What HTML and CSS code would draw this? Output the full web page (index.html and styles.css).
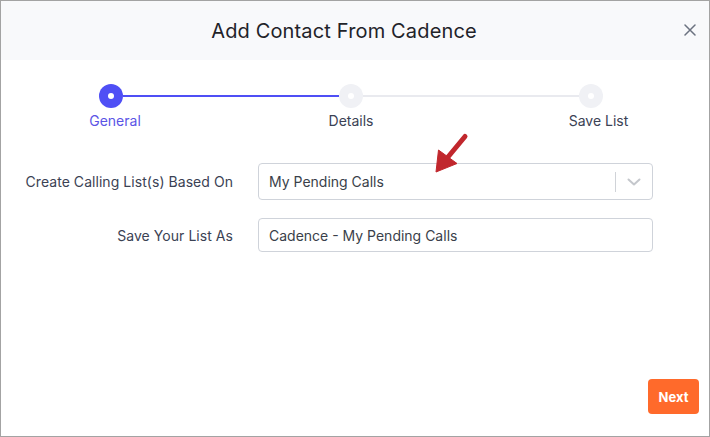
FILE: index.html
```html
<!DOCTYPE html>
<html>
<head>
<meta charset="utf-8">
<link rel="stylesheet" href="styles.css">
</head>
<body>
<div class="modal">
  <div class="header">
    <h1 class="title">Add Contact From Cadence</h1>
    <span class="close">
      <svg width="12" height="12" viewBox="0 0 12 12"><path d="M1 1L11 11M11 1L1 11" stroke="#6b7280" stroke-width="1.5" stroke-linecap="round"/></svg>
    </span>
  </div>
  <div class="body">
    <div class="stepper">
      <div class="step active"><span class="dot"></span><span class="label first">General</span></div>
      <div class="line done"></div>
      <div class="step"><span class="dot"></span><span class="label">Details</span></div>
      <div class="line"></div>
      <div class="step"><span class="dot"></span><span class="label last">Save List</span></div>
    </div>
    <div class="form">
      <label class="flabel">Create Calling List(s) Based On</label>
      <div class="select">
        <span class="value">My Pending Calls</span>
        <span class="sep"></span>
        <span class="chev"><svg width="14" height="8" viewBox="0 0 14 8"><path d="M1.5 1.5L7 6.5L12.5 1.5" fill="none" stroke="#c4c7cc" stroke-width="2" stroke-linecap="round" stroke-linejoin="round"/></svg></span>
      </div>
      <label class="flabel">Save Your List As</label>
      <div class="input">Cadence - My Pending Calls</div>
    </div>
  </div>
  <div class="footer">
    <button class="next">Next</button>
  </div>
  <svg class="arrow" width="40" height="46" viewBox="430 130 40 46">
    <path d="M465 136.5L448 157" stroke="#c1272d" stroke-width="5" stroke-linecap="round"/>
    <path d="M436 172L438.5 150L457 163.5Z" fill="#c1272d" stroke="#c1272d" stroke-width="1" stroke-linejoin="round"/>
  </svg>
</div>
</body>
</html>
```
FILE: styles.css
```css
* { box-sizing: border-box; }
html, body { margin: 0; padding: 0; background: #fff; }
body { font-family: Inter, "Noto Sans", sans-serif; }
.modal {
  position: relative;
  width: 710px;
  height: 437px;
  border: 1px solid #a3a3a3;
  display: flex;
  flex-direction: column;
  background: #fff;
}
.header {
  height: 59px;
  background: #f8f9fb;
  display: flex;
  align-items: center;
  justify-content: center;
  position: relative;
}
.title {
  margin: 0;
  font-size: 20px;
  font-weight: 400;
  color: #1f2329;
  letter-spacing: 0.15px;
  transform: translateX(-11px);
}
.close {
  position: absolute;
  right: 13px;
  top: 23px;
  width: 12px;
  height: 12px;
  display: flex;
}
.body { flex: 1; }
.stepper {
  margin: 24px 0 0 98px;
  width: 504px;
  display: flex;
  align-items: flex-start;
}
.step {
  width: 24px;
  display: flex;
  flex-direction: column;
  align-items: center;
}
.dot {
  width: 24px;
  height: 24px;
  border-radius: 50%;
  background: #f0f1f5;
  display: flex;
  align-items: center;
  justify-content: center;
}
.dot::after {
  content: "";
  width: 6px;
  height: 6px;
  border-radius: 50%;
  background: #fff;
}
.step.active .dot { background: #4f4ff5; }
.label {
  white-space: nowrap;
  margin-top: 4px;
  font-size: 14px;
  line-height: 17px;
  color: #3b4254;
}
.label.first { margin-left: 8px; }
.label.last { margin-left: 15px; }
.step.active .label { color: #5b55e6; }
.line {
  flex: 1;
  height: 2px;
  margin-top: 11px;
  background: #e9eaef;
}
.line.done { background: #4f4ff5; }
.form {
  margin-top: 34px;
  display: grid;
  grid-template-columns: 232px 395px;
  column-gap: 25px;
  row-gap: 18px;
  align-items: center;
}
.flabel {
  text-align: right;
  font-size: 14px;
  color: #3b4254;
  letter-spacing: 0.05px;
}
.select, .input {
  border: 1px solid #cfd3da;
  border-radius: 4px;
  font-size: 14px;
  color: #3a3f4a;
  padding-left: 10px;
  display: flex;
  align-items: center;
}
.select { height: 37px; }
.input { height: 34px; }
.value { flex: 1; }
.sep {
  width: 1px;
  height: 20px;
  background: #d0d3d8;
}
.chev {
  width: 36px;
  display: flex;
  justify-content: center;
}
.footer {
  display: flex;
  justify-content: flex-end;
  padding: 0 10px 22px 0;
}
.next {
  width: 51px;
  height: 35px;
  border: none;
  border-radius: 4px;
  background: #ff6a2b;
  color: #fff;
  font-family: Inter, "Noto Sans", sans-serif;
  font-weight: 700;
  font-size: 13px;
  padding: 0;
}
.arrow {
  position: absolute;
  left: 429px;
  top: 129px;
}
```
